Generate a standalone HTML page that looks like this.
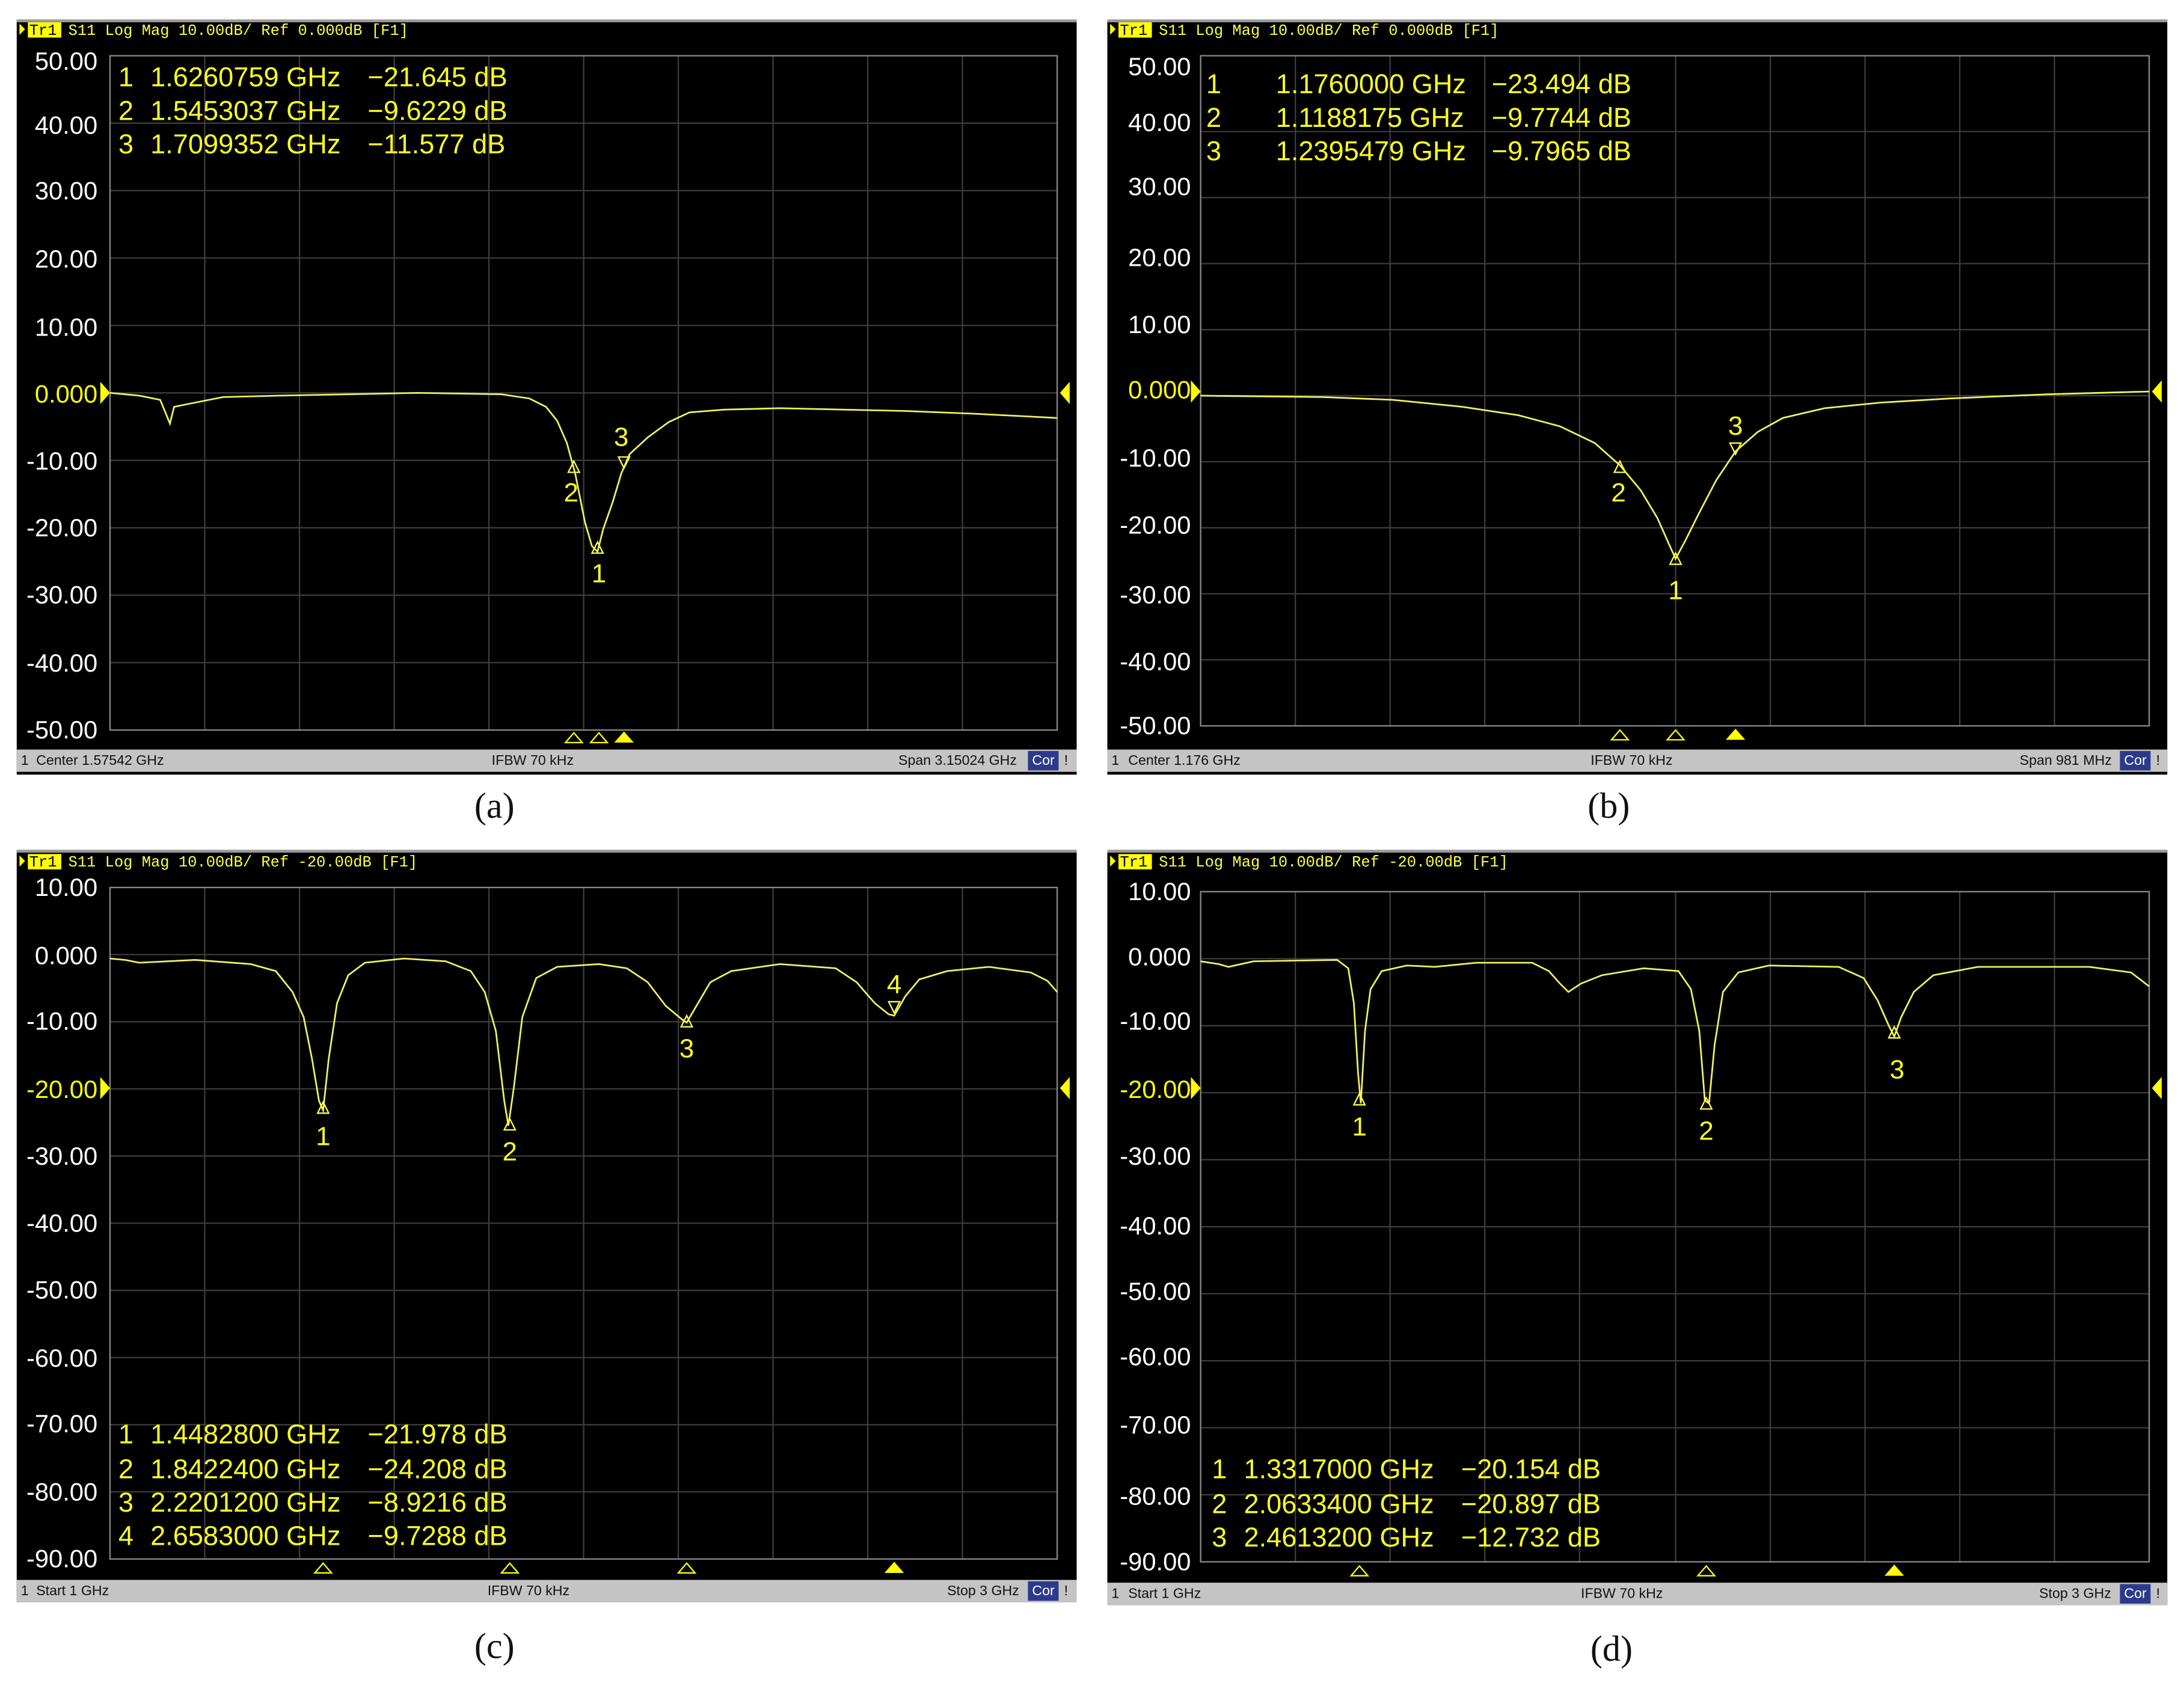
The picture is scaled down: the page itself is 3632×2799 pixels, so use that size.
<!DOCTYPE html>
<html><head><meta charset="utf-8"><style>
html,body{margin:0;padding:0;background:#fff;width:3632px;height:2799px;overflow:hidden}
svg{display:block}
.h{font-family:"Liberation Mono",monospace;font-size:11px;fill:#ffff40}
.y{font-family:"Liberation Sans",sans-serif;font-size:18px;fill:#fff;text-anchor:end}
.m{font-family:"Liberation Sans",sans-serif;font-size:19.5px;fill:#ffff20}
.s{font-family:"Liberation Sans",sans-serif;font-size:10px;fill:#111}
.c{font-family:"Liberation Serif",serif;font-size:26px;fill:#111;text-anchor:middle}
.g{stroke:#3c3c3c;stroke-width:1;fill:none}
.t{stroke:#f0f060;stroke-width:1.2;fill:none}
.mk{stroke:#ffff40;stroke-width:1;fill:none}
.ml{font-family:"Liberation Sans",sans-serif;font-size:19px;fill:#ffff20;text-anchor:middle}
</style></head><body>
<svg width="3632" height="2799" viewBox="0 0 1568 1208" preserveAspectRatio="none">
<rect width="1568" height="1208" fill="#fff"/>

<!-- Panel A -->
<rect x="12" y="14" width="761" height="542" fill="#000"/>
<rect x="12" y="14" width="761" height="2" fill="#999"/>
<path d="M14 17 L18 21 L14 25Z" fill="#ff0"/><rect x="20" y="16" width="24" height="11" fill="#ff0"/>
<text x="21" y="25" class="h" style="fill:#000">Tr1</text>
<text x="49" y="25" class="h">S11 Log Mag 10.00dB/ Ref 0.000dB [F1]</text>
<path class="g" d="M147 40V524M215 40V524M283 40V524M351 40V524M419 40V524M487 40V524M555 40V524M623 40V524M691 40V524M79 88.4H759M79 136.8H759M79 185.2H759M79 233.6H759M79 282H759M79 330.4H759M79 378.8H759M79 427.2H759M79 475.6H759"/>
<rect x="79" y="40" width="680" height="484" fill="none" stroke="#888"/>
<g class="y"><text x="70" y="50">50.00</text><text x="70" y="96">40.00</text><text x="70" y="143">30.00</text><text x="70" y="192">20.00</text><text x="70" y="241">10.00</text><text x="70" y="289" style="fill:#ff0">0.000</text><text x="70" y="337">-10.00</text><text x="70" y="385">-20.00</text><text x="70" y="433">-30.00</text><text x="70" y="482">-40.00</text><text x="70" y="530">-50.00</text></g>
<path d="M72 274 L79 282 L72 290Z" fill="#ff0"/><path d="M768 274 L761 282 L768 290Z" fill="#ff0"/>
<polyline class="t" points="79,282 100,284 115,287 122,304 125,292 135,290 160,285 200,284 300,282 360,283 380,286 392,292 400,302 407,318 413,340 420,375 425,392 429,396 433,380 440,360 446,340 452,326 465,314 480,303 495,296 520,294 560,293 650,295 700,297 759,300"/>
<path class="mk" d="M412 331 L408 339 L416 339Z M429 389 L425 397 L433 397Z M444 328 L452 328 L448 336Z"/>
<text class="ml" x="410" y="360">2</text><text class="ml" x="430" y="418">1</text><text class="ml" x="446" y="320">3</text>
<g class="m"><text x="85" y="62">1</text><text x="108" y="62">1.6260759 GHz</text><text x="264" y="62">−21.645 dB</text><text x="85" y="86">2</text><text x="108" y="86">1.5453037 GHz</text><text x="264" y="86">−9.6229 dB</text><text x="85" y="110">3</text><text x="108" y="110">1.7099352 GHz</text><text x="264" y="110">−11.577 dB</text></g>
<path d="M412 526 L406 533 L418 533Z M430 526 L424 533 L436 533Z" stroke="#ff0" fill="none"/><path d="M448 525 L441 533 L455 533Z" fill="#ff0"/>
<rect x="12" y="538" width="761" height="16" fill="#c4c4c4"/>
<rect x="738" y="539" width="22" height="14" fill="#2c3a8c"/>
<text class="s" x="15" y="549">1</text><text class="s" x="26" y="549">Center 1.57542 GHz</text><text class="s" x="353" y="549">IFBW 70 kHz</text><text class="s" x="645" y="549">Span 3.15024 GHz</text><text class="s" x="741" y="549" style="fill:#fff">Cor</text><text class="s" x="764" y="549">!</text>
<text class="c" x="355" y="587">(a)</text>

<!-- Panel B -->
<rect x="795" y="14" width="761" height="542" fill="#000"/>
<rect x="795" y="14" width="761" height="2" fill="#999"/>
<path d="M797 17 L801 21 L797 25Z" fill="#ff0"/><rect x="803" y="16" width="24" height="11" fill="#ff0"/>
<text x="804" y="25" class="h" style="fill:#000">Tr1</text>
<text x="832" y="25" class="h">S11 Log Mag 10.00dB/ Ref 0.000dB [F1]</text>
<path class="g" d="M930 40V521M998 40V521M1066 40V521M1134 40V521M1203 40V521M1271 40V521M1339 40V521M1407 40V521M1475 40V521M862 94.4H1543M862 141.8H1543M862 189.2H1543M862 236.6H1543M862 284H1543M862 331.4H1543M862 378.8H1543M862 426.2H1543M862 473.6H1543"/>
<rect x="862" y="40" width="681" height="481" fill="none" stroke="#888"/>
<g class="y"><text x="855" y="54">50.00</text><text x="855" y="94">40.00</text><text x="855" y="140">30.00</text><text x="855" y="191">20.00</text><text x="855" y="239">10.00</text><text x="855" y="286" style="fill:#ff0">0.000</text><text x="855" y="335">-10.00</text><text x="855" y="383">-20.00</text><text x="855" y="433">-30.00</text><text x="855" y="481">-40.00</text><text x="855" y="527">-50.00</text></g>
<path d="M855 273 L862 281 L855 289Z" fill="#ff0"/><path d="M1552 273 L1545 281 L1552 289Z" fill="#ff0"/>
<polyline class="t" points="862,284 950,285 1000,287 1050,292 1090,298 1120,306 1145,318 1163,334 1178,352 1190,372 1198,390 1203,401 1210,388 1220,368 1232,345 1246,324 1262,310 1280,300 1310,293 1350,289 1400,286 1470,283 1543,281"/>
<path class="mk" d="M1163 331 L1159 339 L1167 339Z M1203 397 L1199 405 L1207 405Z M1242 318 L1250 318 L1246 326Z"/>
<text class="ml" x="1162" y="360">2</text><text class="ml" x="1203" y="430">1</text><text class="ml" x="1246" y="312">3</text>
<g class="m"><text x="866" y="67">1</text><text x="916" y="67">1.1760000 GHz</text><text x="1071" y="67">−23.494 dB</text><text x="866" y="91">2</text><text x="916" y="91">1.1188175 GHz</text><text x="1071" y="91">−9.7744 dB</text><text x="866" y="115">3</text><text x="916" y="115">1.2395479 GHz</text><text x="1071" y="115">−9.7965 dB</text></g>
<path d="M1163 524 L1157 531 L1169 531Z M1203 524 L1197 531 L1209 531Z" stroke="#ff0" fill="none"/><path d="M1246 523 L1239 531 L1253 531Z" fill="#ff0"/>
<rect x="795" y="538" width="761" height="16" fill="#c4c4c4"/>
<rect x="1522" y="539" width="22" height="14" fill="#2c3a8c"/>
<text class="s" x="798" y="549">1</text><text class="s" x="810" y="549">Center 1.176 GHz</text><text class="s" x="1142" y="549">IFBW 70 kHz</text><text class="s" x="1450" y="549">Span 981 MHz</text><text class="s" x="1525" y="549" style="fill:#fff">Cor</text><text class="s" x="1548" y="549">!</text>
<text class="c" x="1155" y="587">(b)</text>

<!-- Panel C -->
<rect x="12" y="610" width="761" height="540" fill="#000"/>
<rect x="12" y="610" width="761" height="2" fill="#999"/>
<path d="M14 614 L18 618 L14 622Z" fill="#ff0"/><rect x="20" y="613" width="24" height="11" fill="#ff0"/>
<text x="21" y="622" class="h" style="fill:#000">Tr1</text>
<text x="49" y="622" class="h">S11 Log Mag 10.00dB/ Ref -20.00dB  [F1]</text>
<path class="g" d="M147 637V1119M215 637V1119M283 637V1119M351 637V1119M419 637V1119M487 637V1119M555 637V1119M623 637V1119M691 637V1119M79 685.2H759M79 733.4H759M79 781.6H759M79 829.8H759M79 878H759M79 926.2H759M79 974.4H759M79 1022.6H759M79 1070.8H759"/>
<rect x="79" y="637" width="680" height="482" fill="none" stroke="#888"/>
<g class="y"><text x="70" y="643">10.00</text><text x="70" y="692">0.000</text><text x="70" y="739">-10.00</text><text x="70" y="788" style="fill:#ff0">-20.00</text><text x="70" y="836">-30.00</text><text x="70" y="884">-40.00</text><text x="70" y="932">-50.00</text><text x="70" y="981">-60.00</text><text x="70" y="1028">-70.00</text><text x="70" y="1077">-80.00</text><text x="70" y="1125">-90.00</text></g>
<path d="M72 773 L79 781 L72 789Z" fill="#ff0"/><path d="M768 773 L761 781 L768 789Z" fill="#ff0"/>
<polyline class="t" points="79,688 90,689 100,691 140,689 180,692 198,697 210,712 218,730 224,760 229,790 232,797 236,760 242,720 250,700 262,691 290,688 320,690 338,697 348,712 356,740 362,790 365,808 369,780 375,730 385,702 400,694 430,692 450,695 465,705 478,722 490,732 493,734 500,722 510,705 525,697 560,692 600,695 615,705 628,720 638,728 642,729 650,715 660,703 680,697 710,694 740,698 752,704 759,712"/>
<path class="mk" d="M232 791 L228 799 L236 799Z M366 803 L362 811 L370 811Z M493 729 L489 737 L497 737Z M638 719 L646 719 L642 727Z"/>
<text class="ml" x="232" y="822">1</text><text class="ml" x="366" y="833">2</text><text class="ml" x="493" y="759">3</text><text class="ml" x="642" y="713">4</text>
<g class="m"><text x="85" y="1036">1</text><text x="108" y="1036">1.4482800 GHz</text><text x="264" y="1036">−21.978 dB</text><text x="85" y="1061">2</text><text x="108" y="1061">1.8422400 GHz</text><text x="264" y="1061">−24.208 dB</text><text x="85" y="1085">3</text><text x="108" y="1085">2.2201200 GHz</text><text x="264" y="1085">−8.9216 dB</text><text x="85" y="1109">4</text><text x="108" y="1109">2.6583000 GHz</text><text x="264" y="1109">−9.7288 dB</text></g>
<path d="M232 1122 L226 1129 L238 1129Z M366 1122 L360 1129 L372 1129Z M493 1122 L487 1129 L499 1129Z" stroke="#ff0" fill="none"/><path d="M642 1121 L635 1129 L649 1129Z" fill="#ff0"/>
<rect x="12" y="1134" width="761" height="16" fill="#c4c4c4"/>
<rect x="738" y="1135" width="22" height="14" fill="#2c3a8c"/>
<text class="s" x="15" y="1145">1</text><text class="s" x="26" y="1145">Start 1 GHz</text><text class="s" x="350" y="1145">IFBW 70 kHz</text><text class="s" x="680" y="1145">Stop 3 GHz</text><text class="s" x="741" y="1145" style="fill:#fff">Cor</text><text class="s" x="764" y="1145">!</text>
<text class="c" x="355" y="1190">(c)</text>

<!-- Panel D -->
<rect x="795" y="610" width="761" height="542" fill="#000"/>
<rect x="795" y="610" width="761" height="2" fill="#999"/>
<path d="M797 614 L801 618 L797 622Z" fill="#ff0"/><rect x="803" y="613" width="24" height="11" fill="#ff0"/>
<text x="804" y="622" class="h" style="fill:#000">Tr1</text>
<text x="832" y="622" class="h">S11 Log Mag 10.00dB/ Ref -20.00dB  [F1]</text>
<path class="g" d="M930 640V1121M998 640V1121M1066 640V1121M1134 640V1121M1203 640V1121M1271 640V1121M1339 640V1121M1407 640V1121M1475 640V1121M862 688.1H1543M862 736.2H1543M862 784.3H1543M862 832.4H1543M862 880.5H1543M862 928.6H1543M862 976.7H1543M862 1024.8H1543M862 1072.9H1543"/>
<rect x="862" y="640" width="681" height="481" fill="none" stroke="#888"/>
<g class="y"><text x="855" y="646">10.00</text><text x="855" y="693">0.000</text><text x="855" y="739">-10.00</text><text x="855" y="788" style="fill:#ff0">-20.00</text><text x="855" y="836">-30.00</text><text x="855" y="886">-40.00</text><text x="855" y="933">-50.00</text><text x="855" y="980">-60.00</text><text x="855" y="1029">-70.00</text><text x="855" y="1080">-80.00</text><text x="855" y="1127">-90.00</text></g>
<path d="M855 773 L862 781 L855 789Z" fill="#ff0"/><path d="M1552 773 L1545 781 L1552 789Z" fill="#ff0"/>
<polyline class="t" points="862,690 875,692 882,694 900,690 960,689 968,695 972,720 975,770 977,792 980,740 984,710 992,697 1010,693 1030,694 1060,691 1100,691 1112,697 1120,706 1126,712 1135,706 1150,700 1180,695 1205,697 1214,710 1220,740 1224,790 1227,792 1231,750 1237,712 1248,698 1270,693 1320,694 1338,702 1348,718 1356,736 1360,744 1365,730 1374,712 1388,700 1420,694 1500,694 1530,698 1543,708"/>
<path class="mk" d="M976 785 L972 793 L980 793Z M1225 788 L1221 796 L1229 796Z M1360 737 L1356 745 L1364 745Z"/>
<text class="ml" x="976" y="815">1</text><text class="ml" x="1225" y="818">2</text><text class="ml" x="1362" y="774">3</text>
<g class="m"><text x="870" y="1061">1</text><text x="893" y="1061">1.3317000 GHz</text><text x="1049" y="1061">−20.154 dB</text><text x="870" y="1086">2</text><text x="893" y="1086">2.0633400 GHz</text><text x="1049" y="1086">−20.897 dB</text><text x="870" y="1110">3</text><text x="893" y="1110">2.4613200 GHz</text><text x="1049" y="1110">−12.732 dB</text></g>
<path d="M976 1124 L970 1131 L982 1131Z M1225 1124 L1219 1131 L1231 1131Z" stroke="#ff0" fill="none"/><path d="M1360 1123 L1353 1131 L1367 1131Z" fill="#ff0"/>
<rect x="795" y="1136" width="761" height="16" fill="#c4c4c4"/>
<rect x="1522" y="1137" width="22" height="14" fill="#2c3a8c"/>
<text class="s" x="798" y="1147">1</text><text class="s" x="810" y="1147">Start 1 GHz</text><text class="s" x="1135" y="1147">IFBW 70 kHz</text><text class="s" x="1464" y="1147">Stop 3 GHz</text><text class="s" x="1525" y="1147" style="fill:#fff">Cor</text><text class="s" x="1548" y="1147">!</text>
<text class="c" x="1157" y="1192">(d)</text>
</svg>
</body></html>
